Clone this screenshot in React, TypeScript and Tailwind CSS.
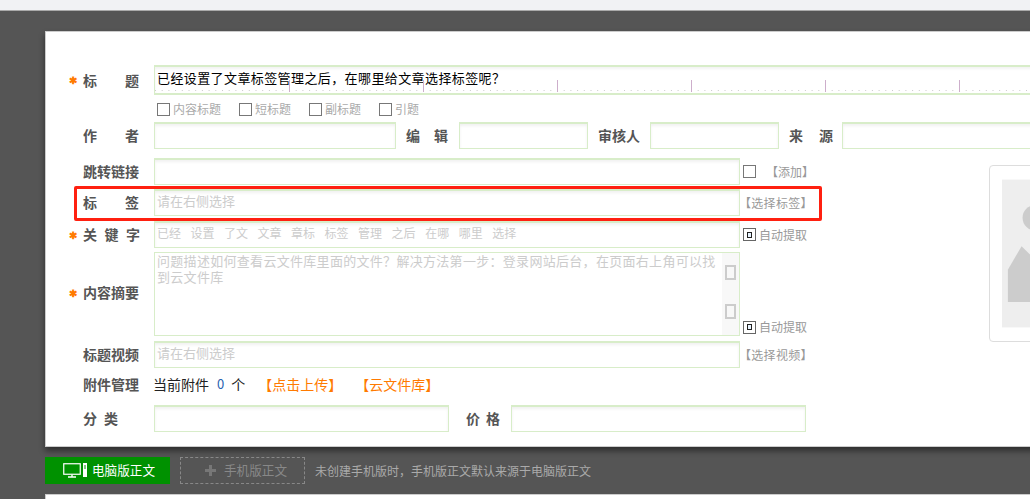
import type { ReactNode } from "react";

const input = "h-[27px] border border-t-2 border-[#d8edc9] bg-white shadow-[inset_0_2px_3px_rgba(0,0,0,0.06)]";
const keywords = ["已经", "设置", "了文", "文章", "章标", "标签", "管理", "之后", "在哪", "哪里", "选择"];

const Label = ({ star, chars, width = 56 }: { star?: boolean; chars: string[]; width?: number }) => (
  <div className="flex w-[108px] shrink-0 items-center pl-[23px] text-[14px] font-bold text-[#555]">
    <span className="w-[14px] text-[10px] leading-none text-[#ff7a00]">{star ? "✱" : ""}</span>
    <span className="flex justify-between" style={{ width }}>
      {chars.map((c, i) => (
        <span key={i}>{c}</span>
      ))}
    </span>
  </div>
);

const Box = ({ label }: { label: string }) => (
  <span className="mr-[18px] flex items-center gap-[3px] text-[12px] text-[#aaa]">
    <span className="h-[13px] w-[13px] border border-[#777]" />
    {label}
  </span>
);

const Checked = () => (
  <span className="flex h-[13px] w-[13px] items-center justify-center border border-[#666]">
    <span className="h-[6px] w-[5px] border border-[#222] bg-[#e8f4ff]" />
  </span>
);

const Auto = () => (
  <div className="ml-[3px] flex items-center gap-[3px] text-[12px] text-[#999]">
    <Checked />
    自动提取
  </div>
);

const Side = ({ children }: { children: ReactNode }) => (
  <div className="ml-[-1px] text-[12px] tracking-[0.3px] text-[#999]">{children}</div>
);

const Ruler = () => {
  const ticks = Array.from({ length: 140 }, (_, i) => i);
  return (
    <svg className="absolute bottom-0 left-0" width="900" height="14">
      {ticks.map((i) => {
        const x = i * 6.7 + 0.5;
        const long = i % 20 === 0 && i > 0;
        return (
          <line
            key={i}
            x1={x}
            x2={x}
            y1={long ? 1 : 11}
            y2={13}
            stroke={long ? "#cdaecb" : "#cccccc"}
            strokeDasharray={long ? undefined : "1 1"}
          />
        );
      })}
    </svg>
  );
};

export default function App() {
  return (
    <div
      className="flex h-[499px] w-[1030px] flex-col overflow-hidden bg-[#555]"
      style={{ fontFamily: '"Noto Sans CJK SC", "Liberation Sans", sans-serif' }}
    >
      <div className="h-[11px] shrink-0 border-b border-[#aaa] bg-[#f1f2f4]" />

      <div className="mt-[20px] ml-[45px] h-[416px] w-[1100px] shrink-0 border border-[#ccc] bg-white pt-[33px] shadow-[0_4px_6px_rgba(0,0,0,0.45)]">
        {/* title */}
        <div className="flex items-center">
          <Label star chars={["标", "题"]} />
          <div className="relative h-[30px] w-[960px] border border-t-2 border-b-2 border-[#d8edc9] pl-[2px] text-[13px] leading-[22px] tracking-[0.4px] text-black shadow-[inset_0_2px_3px_rgba(0,0,0,0.05)]">
            已经设置了文章标签管理之后，在哪里给文章选择标签呢？
            <Ruler />
          </div>
        </div>

        <div className="mt-[6px] ml-[111px] flex h-[16px] items-center">
          <Box label="内容标题" />
          <Box label="短标题" />
          <Box label="副标题" />
          <Box label="引题" />
        </div>

        <div className="mt-[5px] flex items-center">
          <Label chars={["作", "者"]} />
          <div className={`${input} w-[242px]`} />
          <div className="mr-[11px] ml-[10px] flex w-[42px] justify-between text-[14px] font-bold text-[#555]">
            <span>编</span>
            <span>辑</span>
          </div>
          <div className={`${input} w-[129px]`} />
          <div className="ml-[10px] w-[52px] text-[14px] font-bold text-[#555]">审核人</div>
          <div className={`${input} w-[129px]`} />
          <div className="ml-[10px] flex w-[44px] justify-between text-[14px] font-bold text-[#555]">
            <span>来</span>
            <span>源</span>
          </div>
          <div className={`${input} ml-[9px] w-[200px]`} />
        </div>

        <div className="flex">
          <div className="w-[943px] shrink-0">
            <div className="mt-[9px] flex items-center">
              <Label chars={["跳", "转", "链", "接"]} />
              <div className={`${input} w-[586px]`} />
              <span className="ml-[3px] h-[13px] w-[13px] border border-[#777]" />
              <span className="ml-[10px] text-[12px] text-[#999]">【添加】</span>
            </div>

            <div className="relative mt-[4px] flex items-center">
              <div className="absolute top-[-3px] left-[28px] h-[35px] w-[748px] rounded-[2px] border-[3px] border-[#ff2010]" />
              <Label chars={["标", "签"]} />
              <div className={`${input} w-[586px] pl-[2px] text-[13px] leading-[20px] text-[#ccc]`}>请在右侧选择</div>
              <Side>【选择标签】</Side>
            </div>

            <div className="mt-[5px] flex items-center">
              <Label star chars={["关", "键", "字"]} width={57} />
              <div className={`${input} flex w-[586px] gap-[9.5px] pl-[2px] text-[12px] leading-[20px] text-[#ccc]`}>
                {keywords.map((k) => (
                  <span key={k}>{k}</span>
                ))}
              </div>
              <Auto />
            </div>

            <div className="mt-[4px] flex items-center">
              <div className="pb-[3px]">
                <Label star chars={["内", "容", "摘", "要"]} />
              </div>
              <div className="relative h-[84px] w-[586px] border border-[#d8edc9] pr-[22px] pl-[2px] text-[13px] leading-[16px] tracking-[0.3px] text-[#ccc]">
                问题描述如何查看云文件库里面的文件？解决方法第一步：登录网站后台，在页面右上角可以找到云文件库
                <div className="absolute top-0 right-0 flex h-full w-[17px] flex-col items-center gap-[24px] bg-[#f8f8f8] pt-[12px]">
                  <span className="h-[15px] w-[11px] border-2 border-[#ccc]" />
                  <span className="h-[15px] w-[11px] border-2 border-[#ccc]" />
                </div>
              </div>
              <div className="mt-auto">
                <Auto />
              </div>
            </div>

            <div className="mt-[5px] flex items-center">
              <Label chars={["标", "题", "视", "频"]} />
              <div className={`${input} w-[586px] pl-[2px] text-[13px] leading-[20px] text-[#ccc]`}>请在右侧选择</div>
              <Side>【选择视频】</Side>
            </div>
          </div>

          {/* thumbnail */}
          <div className="mt-[16px] h-[177px] w-[60px] shrink-0 rounded-tl-[4px] rounded-bl-[4px] border border-[#ddd] py-[12px] pl-[12px]">
            <svg className="block h-full w-full" viewBox="0 0 47 151">
              <rect width="47" height="151" fill="#eeeeee" />
              <circle cx="34" cy="39" r="13" fill="#cccccc" />
              <path d="M6 92 L20 68 L47 95 V125 H6 Z" fill="#cccccc" />
            </svg>
          </div>
        </div>

        <div className="mt-[6px] flex h-[20px] items-center">
          <Label chars={["附", "件", "管", "理"]} />
          <span className="ml-[-1px] text-[14px] text-[#222]">当前附件</span>
          <span className="ml-[8px] text-[13px] text-[#2a62b0]">0</span>
          <span className="ml-[7px] text-[14px] text-[#222]">个</span>
          <span className="ml-[13px] text-[14px] text-[#ff7a00]">【点击上传】</span>
          <span className="ml-[13px] text-[14px] text-[#ff7a00]">【云文件库】</span>
        </div>

        <div className="mt-[11px] flex items-center">
          <Label chars={["分", "类"]} width={35} />
          <div className={`${input} w-[295px]`} />
          <div className="ml-[17px] flex w-[45px] justify-start gap-[6px] text-[14px] font-bold text-[#555]">
            <span>价</span>
            <span>格</span>
          </div>
          <div className={`${input} w-[295px]`} />
        </div>
      </div>

      <div className="mt-[10px] ml-[45px] flex h-[27px] shrink-0 items-center">
        <div className="flex h-[27px] w-[125px] items-center bg-[#009100] pl-[18px] text-[12.6px] text-white">
          <svg width="24" height="15" viewBox="0 0 24 15" fill="none">
            <rect x="0.75" y="0.75" width="16.5" height="10.5" stroke="white" strokeWidth="1.2" />
            <path d="M9 11.5 V13.5 M5 14 H13" stroke="white" strokeWidth="1.4" />
            <path d="M20 0 H24 V14 H20 Z" fill="white" />
            <path d="M21 3 H23 M21 5 H23" stroke="#009100" />
          </svg>
          <span className="ml-[5px]">电脑版正文</span>
        </div>
        <div className="ml-[10px] flex h-[27px] w-[125px] items-center border border-dashed border-[#888] pl-[24px] text-[12.6px] text-[#888]">
          <svg width="11" height="11" viewBox="0 0 11 11">
            <path d="M4 0 H7 V4 H11 V7 H7 V11 H4 V7 H0 V4 H4 Z" fill="#777" />
          </svg>
          <span className="ml-[8px]">手机版正文</span>
        </div>
        <span className="ml-[10px] text-[12px] text-[#aaa]">未创建手机版时，手机版正文默认来源于电脑版正文</span>
      </div>

      <div className="mt-[10px] ml-[45px] h-[20px] w-[1100px] shrink-0 border border-[#ccc] bg-white" />
    </div>
  );
}
